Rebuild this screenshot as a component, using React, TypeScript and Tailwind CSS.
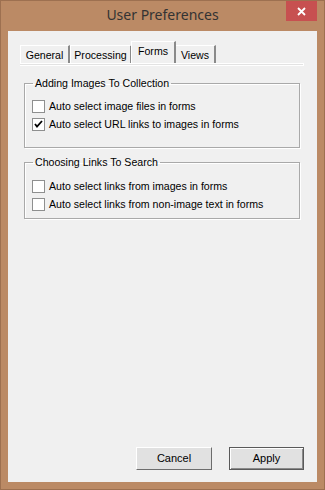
import React from "react";

const font = { fontFamily: '"Liberation Sans", Arial, sans-serif' };

function Check({ checked, label }: { checked?: boolean; label: string }) {
  return (
    <div className="flex items-center h-[18px]">
      <div className="w-[13px] h-[13px] border border-[#8e8f8f] bg-white flex items-center justify-center shrink-0">
        {checked && (
          <svg width="9" height="9" viewBox="0 0 9 9">
            <path d="M1 4 L3 6.5 L8 1" stroke="#000" strokeWidth="1.8" fill="none" />
          </svg>
        )}
      </div>
      <span className="ml-[4px] text-[10.6px] text-black leading-[13px]">{label}</span>
    </div>
  );
}

function Group({ title, children }: { title: string; children: React.ReactNode }) {
  return (
    <fieldset className="border border-[#a9a9a9] shadow-[inset_1px_1px_0_#fff,1px_1px_0_#fff] mx-[16px] mr-[17px] px-[7px]">
      <legend className="ml-[1px] px-[2px] text-[10.6px] leading-[13px] text-black">{title}</legend>
      {children}
    </fieldset>
  );
}

function Tab({ label, w, selected }: { label: string; w: number; selected?: boolean }) {
  return (
    <div
      className={
        "flex items-start justify-center text-[10.6px] leading-[13px] text-black bg-[#f0f0f0] border-t border-l border-white border-r-2 border-r-[#8a8a8a] " +
        (selected ? "h-[22px] pt-[3px] -mx-[1px] z-10 relative" : "h-[18px] pt-[3px]")
      }
      style={{ width: w }}
    >
      {label}
    </div>
  );
}

export default function App() {
  return (
    <div className="w-[325px] h-[490px] bg-[#bb8a65] border border-[#9d7050] flex flex-col" style={font}>
      <div className="grid grid-cols-[1fr_auto_1fr] h-[30px] items-start">
        <div />
        <div
          className="pt-[4px] text-[14px] leading-[20px] text-[#333333]"
          style={{ fontFamily: '"Noto Sans", "Open Sans", sans-serif' }}
        >
          User Preferences
        </div>
        <div className="flex justify-end pr-[7px]">
          <div className="w-[31px] h-[20px] bg-[#c75050] flex items-center justify-center">
            <svg width="9" height="9" viewBox="0 0 9 9">
              <path d="M1 1 L8 8 M8 1 L1 8" stroke="#fff" strokeWidth="1.8" />
            </svg>
          </div>
        </div>
      </div>
      <div className="ml-[7px] w-[309px] h-[451px] bg-[#f0f0f0] flex flex-col">
        <div className="pl-[12px] pt-[11px]">
          <div className="flex items-end h-[21px]">
            <Tab label="General" w={50} />
            <Tab label="Processing" w={62} />
            <Tab label="Forms" w={45} selected />
            <Tab label="Views" w={41} />
          </div>
          <div className="w-[284px] h-[3px] border-t border-white bg-[#e3e3e3] border-b border-r border-[#6d6d6d] border-t-white" />
        </div>
        <div className="mt-[11px]">
          <Group title="Adding Images To Collection">
            <div className="pt-[7px] pb-[14px]">
              <Check label="Auto select image files in forms" />
              <Check label="Auto select URL links to images in forms" checked />
            </div>
          </Group>
        </div>
        <div className="mt-[8px]">
          <Group title="Choosing Links To Search">
            <div className="pt-[8px] pb-[5px]">
              <Check label="Auto select links from images in forms" />
              <Check label="Auto select links from non-image text in forms" />
            </div>
          </Group>
        </div>
        <div className="flex-1" />
        <div className="flex justify-end gap-[17px] pr-[13px] pb-[12px]">
          <button className="w-[76px] h-[23px] bg-[#e1e1e1] border border-t-white border-l-white border-r-[#6d6d6d] border-b-[#6d6d6d] text-[11px] text-black">
            Cancel
          </button>
          <button className="w-[75px] h-[23px] bg-[#e1e1e1] border border-[#5a5a5a] shadow-[inset_1px_1px_0_#fff,inset_-1px_-1px_0_#8a8a8a] text-[11px] text-black">
            Apply
          </button>
        </div>
      </div>
    </div>
  );
}
